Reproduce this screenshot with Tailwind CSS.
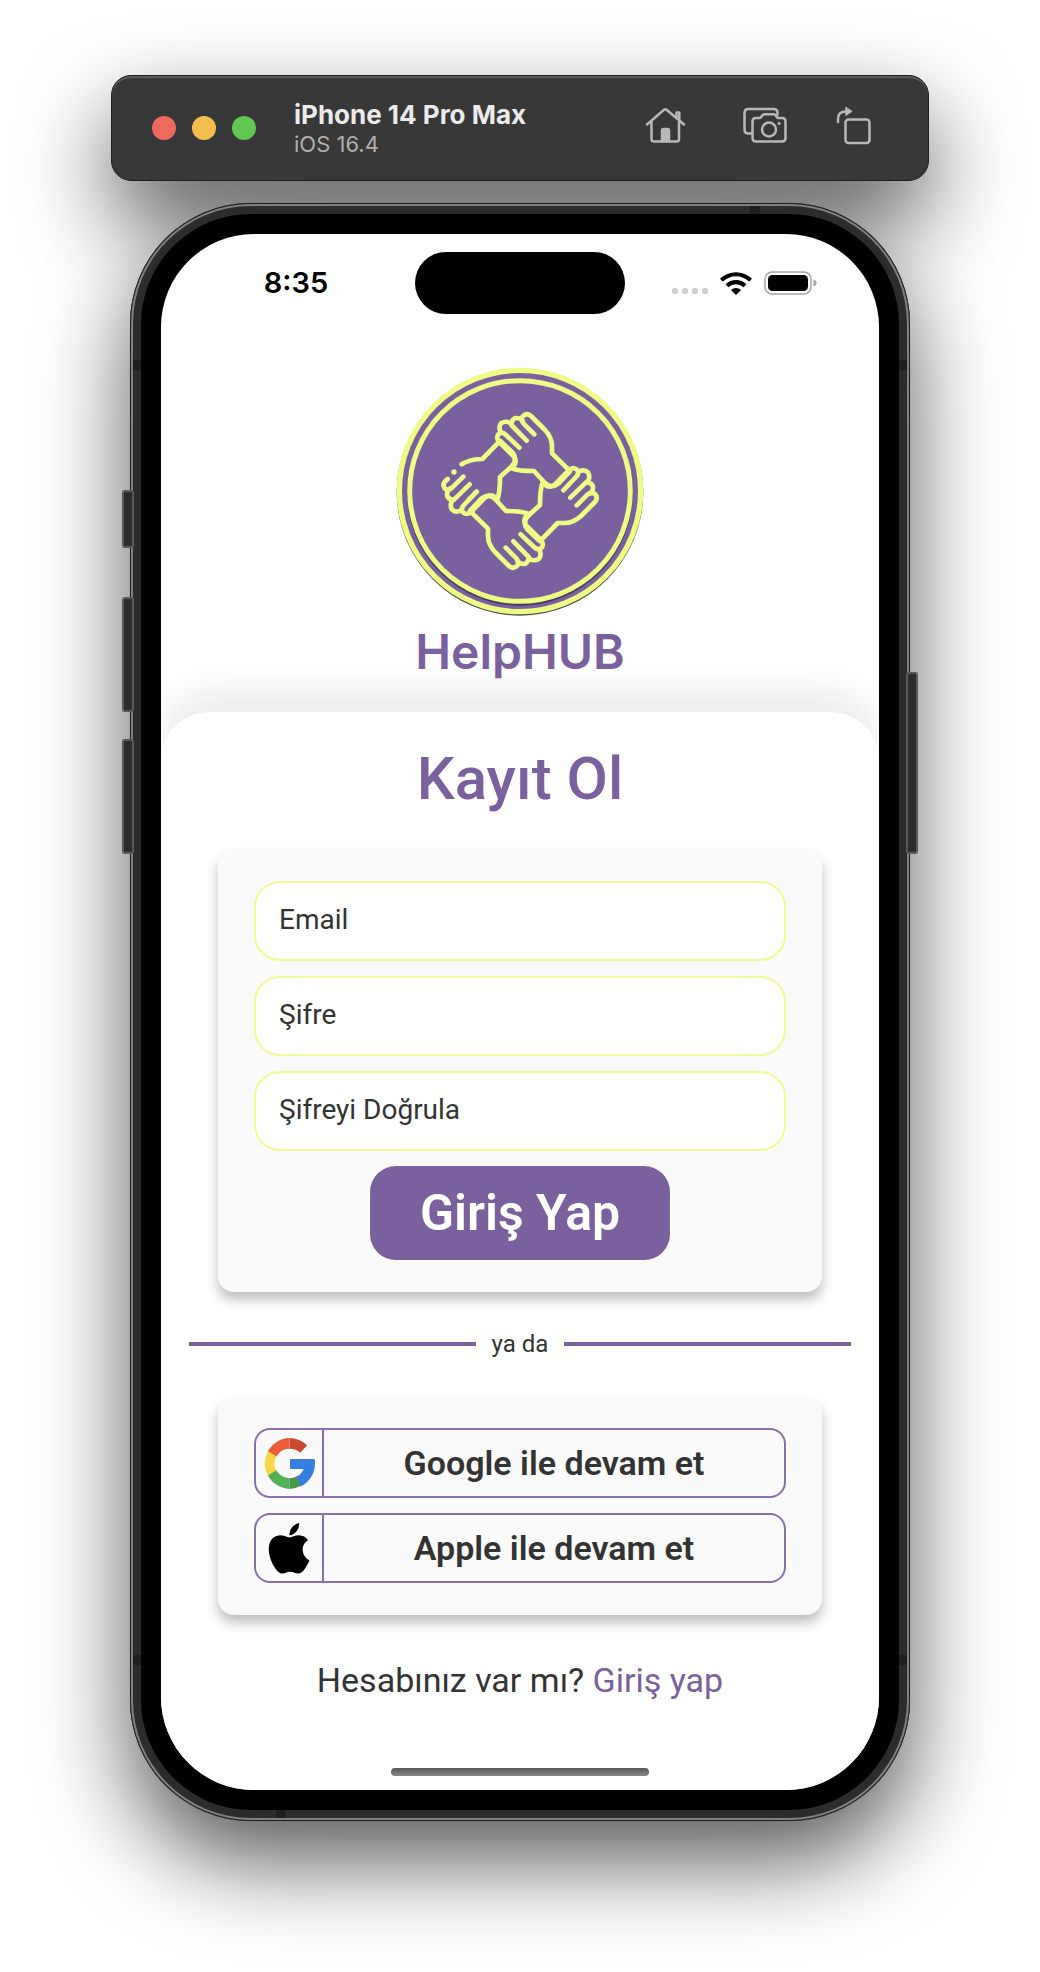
<!DOCTYPE html>
<html lang="tr">
<head>
<meta charset="utf-8">
<meta name="viewport" content="width=device-width, initial-scale=1">
<title>HelpHUB – Kayıt Ol</title>
<script src="https://cdn.jsdelivr.net/npm/@tailwindcss/browser@4"></script>
</head>
<body class="bg-white font-['Roboto',sans-serif] text-[#333333]">
<div class="flex min-h-screen flex-col items-center overflow-hidden px-4 pt-[75px] pb-[151px]">

  <!-- Simulator toolbar -->
  <header class="w-full max-w-[818px] rounded-[20px] shadow-[0_40px_90px_rgba(0,0,0,0.65)]">
    <div class="relative z-20 flex h-[106px] items-center rounded-[20px] border border-[#1f1f1f] bg-[#383838] pr-[57px] pl-10 font-['Inter',sans-serif] shadow-[inset_0_2px_0_#5a5a5a]">
      <div class="flex gap-4">
        <span class="size-6 rounded-full bg-[#ed6a5e]"></span>
        <span class="size-6 rounded-full bg-[#f5bf4f]"></span>
        <span class="size-6 rounded-full bg-[#62c554]"></span>
      </div>
      <div class="ml-[38px] flex-1 pt-0.5">
        <p class="text-[26px] leading-[30px] font-bold text-[#ebebeb]">iPhone 14 Pro Max</p>
        <p class="text-[22px] leading-7 text-[#afafaf]">iOS 16.4</p>
      </div>
      <div class="flex items-center pb-1.5 text-[#b8b8b8]">
        <button aria-label="Home" class="mr-[56px]">
          <svg class="h-[38px] w-[41px]" viewBox="0 0 41 38" fill="none" stroke="currentColor" stroke-width="2.500" stroke-linecap="round" stroke-linejoin="round"><path d="M2 18.500 19 3.800Q20.300 2.800 21.600 3.800L39 18.500M6.500 16v17q0 2.500 2.500 2.500h22.500q2.500 0 2.500-2.500V16M31.500 11.500V6.500h2.800v8"/><path d="M17 24.500q0-1.500 1.500-1.500h4q1.500 0 1.500 1.500V35h-7z" fill="currentColor"/></svg>
        </button>
        <button aria-label="Screenshot" class="mr-[49px]">
          <svg class="h-[38px] w-[45px]" viewBox="0 0 45 38" fill="none" stroke="currentColor" stroke-width="2.500" stroke-linecap="round" stroke-linejoin="round"><path d="M9 27.500H6.500q-4 0-4-4V7q0-4 4-4h25q4 0 4 4v1.500M14 12h3.500q1 0 1.700-1l1-1.500q.8-1.200 2.200-1.200h9.200q1.400 0 2.200 1.200l1 1.500q.7 1 1.700 1H40q3.500 0 3.500 3.500V32q0 3.500-3.500 3.500H14q-3.500 0-3.500-3.500V15.500Q10.500 12 14 12z"/><circle cx="27" cy="23.500" r="7"/><circle cx="37" cy="17.500" r="1.100" fill="currentColor" stroke-width="1"/></svg>
        </button>
        <button aria-label="Rotate">
          <svg class="h-[40px] w-[35px]" viewBox="0 0 35 40" fill="none" stroke="currentColor" stroke-width="2.500" stroke-linecap="round" stroke-linejoin="round"><rect x="9.500" y="14.500" width="24" height="23.500" rx="3"/><path d="M2 17v-3Q2 6.500 9.500 6.500"/><path d="M9.800 2.500v8l6-4z" fill="currentColor" stroke-width="1"/></svg>
        </button>
      </div>
    </div>
  </header>

  <!-- Phone -->
  <div class="relative z-10 mt-[22px] w-full max-w-[780px]">
    <!-- Side buttons -->
    <span class="absolute top-[287px] -left-2 h-[58px] w-3 rounded-[3px] border-2 border-[#5a5a5a] bg-[#2c2c2c]"></span>
    <span class="absolute top-[394px] -left-2 h-[115px] w-3 rounded-[3px] border-2 border-[#5a5a5a] bg-[#2c2c2c]"></span>
    <span class="absolute top-[536px] -left-2 h-[115px] w-3 rounded-[3px] border-2 border-[#5a5a5a] bg-[#2c2c2c]"></span>
    <span class="absolute top-[469px] -right-2 h-[182px] w-3 rounded-[3px] border-2 border-[#5a5a5a] bg-[#2c2c2c]"></span>

    <div class="rounded-[121px] bg-black p-[31px] shadow-[inset_0_0_0_1px_#1c1c1c,inset_0_0_0_3px_#808080,inset_0_0_0_11px_#2c2c2c,0_40px_90px_rgba(0,0,0,0.65)]">
      <main class="relative overflow-hidden rounded-[93px] bg-white">

        <!-- Status bar -->
        <div class="grid grid-cols-[1fr_210px_1fr] items-center pt-[18px]">
          <p class="pl-4 text-center font-['Inter',sans-serif] text-[29px] font-semibold text-black">8:35</p>
          <div class="h-[62px] rounded-full bg-black"></div>
          <div class="flex items-center justify-center pr-4">
            <span class="mt-4 flex gap-1"><i class="size-1.5 rounded-xs bg-[#cfcfcf]"></i><i class="size-1.5 rounded-xs bg-[#cfcfcf]"></i><i class="size-1.5 rounded-xs bg-[#cfcfcf]"></i><i class="size-1.5 rounded-xs bg-[#cfcfcf]"></i></span>
            <svg class="ml-3 h-6 w-8" viewBox="0 0 32 24"><path d="M0 7.700A23 23 0 0 1 32 7.700L29.200 10.600A19 19 0 0 0 2.800 10.600zM5.500 13.300A15 15 0 0 1 26.500 13.300L23.600 16.200A11 11 0 0 0 8.400 16.200zM11 18.900A7.200 7.200 0 0 1 21 18.900L16 24z"/></svg>
            <svg class="ml-3 h-6 w-[53px]" viewBox="0 0 53 24"><rect x="1" y="1" width="46" height="22" rx="7" fill="none" stroke="#a5a5a5" stroke-width="1.500"/><rect x="4" y="4" width="40" height="16" rx="4.500"/><path d="M49.500 8.500q3 1 3 3.500t-3 3.500z" fill="#a5a5a5"/></svg>
          </div>
        </div>

        <!-- Brand -->
        <div class="mt-[53px] flex h-[345px] flex-col items-center">
          <svg class="h-[248px] w-[248px] shrink-0 overflow-visible" viewBox="-372 -372 744 744" role="img" aria-label="HelpHUB">
            <defs>
              <g id="palm">
                <path d="M-2-130L-42-168Q-54-180-65-170Q-72-160-64-148L-20-105Q-10-95-15-80L-25-68Q-5-60 42-60L72-27Q92-5 115-22L150-59"/>
              </g>
              <g id="hand">
                <use href="#palm"/>
                <path d="M43-170L10-203Q2-213 8-224Q20-236 33-225L75-183Q96-160 96-135V-113L145-65M20-151L-26-198M-26-198Q-26-213-16-218Q-2-222 8-210M-58-176Q-66-194-56-204Q-42-212-28-203"/>
              </g>
            </defs>
            <circle r="370" cy="4" fill="#55524a"/>
            <circle r="362" fill="#7b609e" stroke="#eefc86" stroke-width="16"/>
            <circle r="333" cy="5" fill="none" stroke="#3d2f50" stroke-width="12" opacity=".8"/>
            <circle r="331" fill="#7b609e" stroke="#eefc86" stroke-width="15"/>
            <g fill="none" stroke="#eefc86" stroke-width="14" stroke-linecap="round" stroke-linejoin="round">
              <use href="#hand"/>
              <use href="#hand" transform="rotate(90)"/>
              <use href="#hand" transform="rotate(180)"/>
              <path d="M-130 2L-153 25M-170-43L-206-8Q-216 0-226-8Q-236-22-217-36M-65-145L-113-96Q-150-96-175-80M-151-20L-198 26M-198 26Q-213 26-218 16Q-222 2-210-8M-176 58Q-194 66-204 56Q-212 42-203 28"/>
              <use href="#palm" transform="rotate(-90)"/>
            </g>
            <circle cx="-198" cy="-57" r="8" fill="#eefc86"/>
          </svg>
          <p class="mt-1 font-['Inter',sans-serif] text-[48px] leading-[66px] font-semibold text-[#7b609e]">HelpHUB</p>
        </div>

        <!-- Sign-up sheet -->
        <section class="rounded-t-[48px] bg-white px-7 pt-[30px] pb-3.5 shadow-[0_-26px_34px_-4px_rgba(0,0,0,0.08)]">
          <h1 class="text-center text-[60px] leading-[74px] font-medium text-[#7b609e]">Kayıt Ol</h1>

          <form class="mx-[29px] mt-[33px] flex flex-col gap-[15px] rounded-2xl bg-[#fafafa] px-9 py-8 shadow-[0_8px_12px_rgba(0,0,0,0.25)]">
            <input type="email" aria-label="Email" placeholder="Email" class="h-20 w-full rounded-[26px] border-2 border-[#f0fb92] bg-white px-[23px] pb-1 text-[28px] placeholder:text-[#333333]">
            <input type="password" aria-label="Şifre" placeholder="Şifre" class="h-20 w-full rounded-[26px] border-2 border-[#f0fb92] bg-white px-[23px] pb-1 text-[28px] placeholder:text-[#333333]">
            <input type="password" aria-label="Şifreyi Doğrula" placeholder="Şifreyi Doğrula" class="h-20 w-full rounded-[26px] border-2 border-[#f0fb92] bg-white px-[23px] pb-1 text-[28px] placeholder:text-[#333333]">
            <button type="submit" class="h-[94px] w-[300px] self-center rounded-[26px] bg-[#7b609e] text-[50px] font-semibold text-white">Giriş Yap</button>
          </form>

          <div class="mt-[34px] flex h-9 items-center gap-4 text-2xl">
            <span class="h-1 flex-1 bg-[#7b609e]"></span>
            <span>ya da</span>
            <span class="h-1 flex-1 bg-[#7b609e]"></span>
          </div>

          <div class="mx-[29px] mt-[34px] flex flex-col gap-[15px] rounded-2xl bg-[#fafafa] px-9 py-8 text-[34px] font-semibold shadow-[0_8px_12px_rgba(0,0,0,0.25)]">
            <button class="flex h-[70px] items-stretch rounded-2xl border-2 border-[#8a6fae]">
              <span class="flex w-[68px] items-center justify-center border-r-2 border-[#8a6fae]">
                <svg class="size-[51px]" viewBox="0 0 52 52"><path d="M26 0A26 26 0 0 0 3.800 14L12.500 19A16 16 0 0 1 26 11z" fill="#ec5d38"/><path d="M26 0A26 26 0 0 1 44 7.500L37 15A16 16 0 0 0 26 11z" fill="#c84b31"/><path d="M4.200 13.500A26 26 0 0 0 4.200 38.500L12.500 33.500A16 16 0 0 1 12.500 18.500z" fill="#f9d548"/><path d="M26 52A26 26 0 0 1 4 38.200L12.500 33A16 16 0 0 0 26 41z" fill="#52b057"/><path d="M26 52A26 26 0 0 0 38 48.500L33.500 39A16 16 0 0 1 26 41z" fill="#46964b"/><path d="M27.500 21.500H50.500Q52.500 21.500 52 26A26 26 0 0 1 37 49.500L33.500 39Q38 37 40.500 31.500H27.500Q26.500 31.500 26.500 30.500V22.500Q26.500 21.500 27.500 21.500z" fill="#377ee2"/></svg>
              </span>
              <span class="flex flex-1 items-center justify-center">Google ile devam et</span>
            </button>
            <button class="flex h-[70px] items-stretch rounded-2xl border-2 border-[#8a6fae]">
              <span class="flex w-[68px] items-center justify-center border-r-2 border-[#8a6fae]">
                <svg class="h-[51px] w-[42px]" viewBox="0 0 42 51"><path d="M21.500 12.200Q21 7.500 24.500 3.800Q27.500.7 31.200 0Q31.500 5 28.300 8.500Q25.500 12 21.500 12.200zM21.500 14.500C24 14.500 27 12.300 31 12.300Q37 12.500 40 17.300Q34.500 20.500 34.700 27Q35 34.500 41.500 37.200Q40 41.500 37 45.500Q33.800 50.300 30.500 50.500C27.500 50.700 26 48.700 22.300 48.700S17 50.500 14.200 50.600Q11 50.800 7.500 45.800Q1 36.500.7 26.500Q1 13.200 12 12.300C16 12.300 19 14.500 21.500 14.500z" fill="#000"/></svg>
              </span>
              <span class="flex flex-1 items-center justify-center">Apple ile devam et</span>
            </button>
          </div>

          <p class="mt-[45px] text-center text-[34px] leading-10">Hesabınız var mı? <a href="#" class="text-[#7b609e]">Giriş yap</a></p>

          <div class="mx-auto mt-[68px] h-2 w-[258px] rounded-full bg-linear-to-b from-[#585858] to-[#868686]"></div>
        </section>
      </main>
    </div>

    <!-- Antenna bands -->
    <span class="absolute top-[3px] right-[150px] h-2 w-2.5 bg-[#1f1f1f]"></span>
    <span class="absolute bottom-[3px] left-[146px] h-2 w-2.5 bg-[#1f1f1f]"></span>
    <span class="absolute top-[157px] left-[3px] h-2.5 w-2 bg-[#1f1f1f]"></span>
    <span class="absolute top-[157px] right-[3px] h-2.5 w-2 bg-[#1f1f1f]"></span>
    <span class="absolute bottom-[156px] left-[3px] h-2.5 w-2 bg-[#1f1f1f]"></span>
    <span class="absolute right-[3px] bottom-[156px] h-2.5 w-2 bg-[#1f1f1f]"></span>
  </div>
</div>
</body>
</html>
